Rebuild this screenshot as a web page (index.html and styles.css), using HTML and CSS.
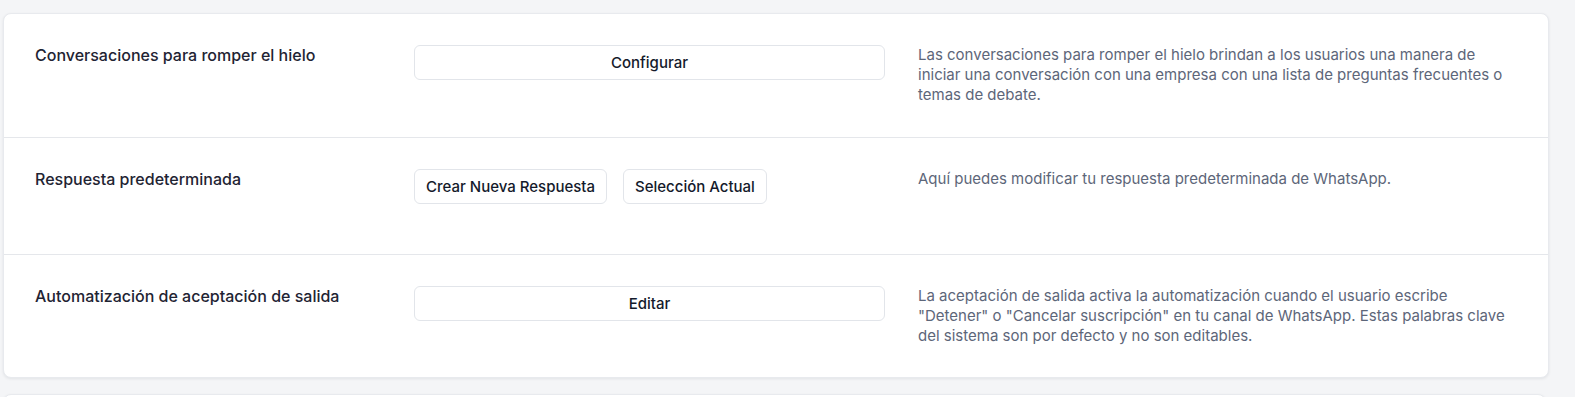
FILE: index.html
```html
<!DOCTYPE html>
<html lang="es">
<head>
<meta charset="UTF-8">
<meta name="viewport" content="width=device-width, initial-scale=1.0">
<title>Configuración de WhatsApp</title>
<link rel="stylesheet" href="styles.css">
</head>
<body>
    <div class="page">
        <div class="card">
            <div class="setting-row">
                <div class="setting-label">Conversaciones para romper el hielo</div>
                <div class="setting-actions">
                    <button type="button" class="btn btn-block">Configurar</button>
                </div>
                <p class="setting-desc">Las conversaciones para romper el hielo brindan a los usuarios una manera de iniciar una conversación con una empresa con una lista de preguntas frecuentes o temas de debate.</p>
            </div>

            <div class="setting-row">
                <div class="setting-label">Respuesta predeterminada</div>
                <div class="setting-actions">
                    <button type="button" class="btn">Crear Nueva Respuesta</button>
                    <button type="button" class="btn">Selección Actual</button>
                </div>
                <p class="setting-desc">Aquí puedes modificar tu respuesta predeterminada de WhatsApp.</p>
            </div>

            <div class="setting-row">
                <div class="setting-label">Automatización de aceptación de salida</div>
                <div class="setting-actions">
                    <button type="button" class="btn btn-block">Editar</button>
                </div>
                <p class="setting-desc">La aceptación de salida activa la automatización cuando el usuario escribe "Detener" o "Cancelar suscripción" en tu canal de WhatsApp. Estas palabras clave del sistema son por defecto y no son editables.</p>
            </div>
        </div>

        <div class="card card-next"></div>
    </div>
</body>
</html>
```

FILE: styles.css
```css
* {
    box-sizing: border-box;
}

html, body {
    margin: 0;
    padding: 0;
    height: 100%;
    overflow: hidden;
}

body {
    font-family: Inter, "Noto Sans", sans-serif;
    background-color: #f4f5f7;
    color: #1f2937;
}

.page {
    padding: 13px 26px 0 3px;
}

.card {
    background: #fff;
    border: 1px solid #e8eaee;
    border-radius: 8px;
    box-shadow: 0 1px 3px rgba(15, 23, 42, 0.08);
}

.card-next {
    margin-top: 16px;
    height: 60px;
    margin-right: 3px;
}

.setting-row {
    display: grid;
    grid-template-columns: 379px 471px 1fr;
    align-items: start;
    padding: 31px 31px 31px 31px;
    min-height: 117px;
    border-top: 1px solid #e5e7eb;
}

.setting-row:first-child {
    border-top: none;
    min-height: 123px;
}

.setting-label {
    font-size: 16px;
    font-weight: 500;
    line-height: 20px;
    color: #1f2433;
}

.setting-actions {
    display: flex;
    gap: 16px;
}

.btn {
    font-family: inherit;
    font-size: 15px;
    font-weight: 500;
    color: #141a2b;
    background: #fff;
    border: 1px solid #e2e5ea;
    border-radius: 6px;
    height: 35px;
    padding: 0 11px;
    cursor: pointer;
}

.btn-block {
    width: 100%;
}

.setting-desc {
    margin: 0;
    padding-left: 33px;
    font-size: 15px;
    line-height: 20px;
    color: #5d6679;
}
```
